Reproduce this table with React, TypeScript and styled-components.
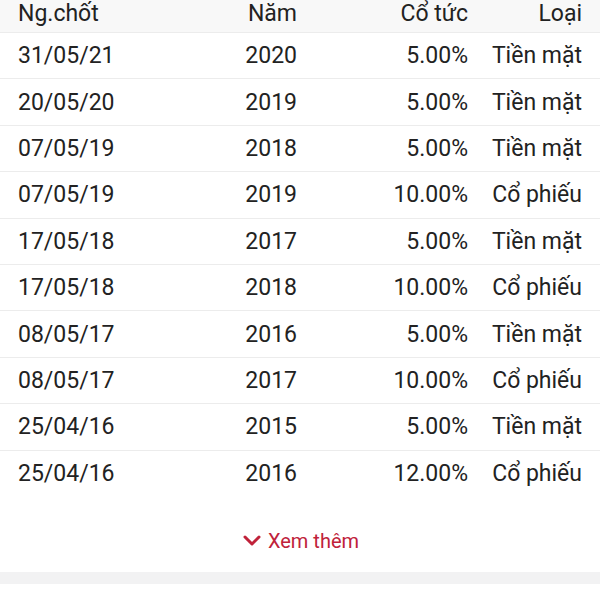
import React from "react";
import styled, { createGlobalStyle } from "styled-components";

const Global = createGlobalStyle`
  html, body { margin: 0; padding: 0; background: #ffffff; }
  body { font-family: Roboto, "Noto Sans", Arial, sans-serif; }
`;

const Page = styled.div`
  width: 600px;
  height: 600px;
  overflow: hidden;
  background: #fff;
  display: flex;
  flex-direction: column;
`;

const Row = styled.div<{ $header?: boolean }>`
  display: grid;
  grid-template-columns: 180px 99px 171px 114px;
  padding: 0 18px;
  align-items: center;
  height: ${(p) => (p.$header ? "32px" : "46.4px")};
  box-sizing: border-box;
  padding-bottom: ${(p) => (p.$header ? "6px" : "0")};
  background: ${(p) => (p.$header ? "#f8f8f8" : "#fff")};
  border-top: ${(p) => (p.$header ? "none" : "1px solid #ececec")};
  font-size: 23px;
  line-height: 27px;
  color: #222;
`;

const Cell = styled.div<{ $align?: "left" | "right" }>`
  text-align: ${(p) => p.$align ?? "right"};
  white-space: nowrap;
`;

const More = styled.div`
  height: 76px;
  display: flex;
  align-items: center;
  justify-content: center;
  gap: 7px;
  color: #c0223a;
  font-size: 20px;
  padding-left: 2px;
  padding-top: 14px;
  box-sizing: border-box;
`;

const Band = styled.div`
  height: 12px;
  background: #f2f2f3;
`;

const data = [
  ["31/05/21", "2020", "5.00%", "Tiền mặt"],
  ["20/05/20", "2019", "5.00%", "Tiền mặt"],
  ["07/05/19", "2018", "5.00%", "Tiền mặt"],
  ["07/05/19", "2019", "10.00%", "Cổ phiếu"],
  ["17/05/18", "2017", "5.00%", "Tiền mặt"],
  ["17/05/18", "2018", "10.00%", "Cổ phiếu"],
  ["08/05/17", "2016", "5.00%", "Tiền mặt"],
  ["08/05/17", "2017", "10.00%", "Cổ phiếu"],
  ["25/04/16", "2015", "5.00%", "Tiền mặt"],
  ["25/04/16", "2016", "12.00%", "Cổ phiếu"],
];

export default function App() {
  return (
    <Page>
      <Global />
      <Row $header>
        <Cell $align="left">Ng.chốt</Cell>
        <Cell>Năm</Cell>
        <Cell>Cổ tức</Cell>
        <Cell>Loại</Cell>
      </Row>
      {data.map((r, i) => (
        <Row key={i}>
          <Cell $align="left">{r[0]}</Cell>
          <Cell>{r[1]}</Cell>
          <Cell>{r[2]}</Cell>
          <Cell>{r[3]}</Cell>
        </Row>
      ))}
      <More>
        <svg width="18" height="12" viewBox="0 0 18 12">
          <polyline points="2,2 9,9 16,2" fill="none" stroke="#c0223a" strokeWidth="3" strokeLinecap="round" strokeLinejoin="round" />
        </svg>
        <span>Xem thêm</span>
      </More>
      <Band />
    </Page>
  );
}
